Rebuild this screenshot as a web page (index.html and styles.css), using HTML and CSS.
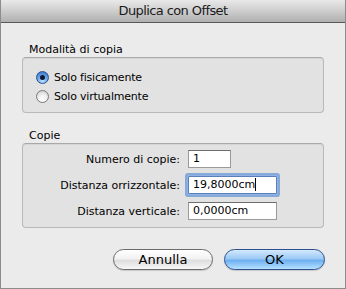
FILE: index.html
```html
<!DOCTYPE html>
<html lang="it">
<head>
  <meta charset="UTF-8">
  <title>Duplica con Offset</title>
  <link rel="stylesheet" href="styles.css">
</head>
<body>
  <div class="window">
    <!-- Title bar -->
    <div class="titlebar">Duplica con Offset</div>

    <div class="content">
      <!-- Copy mode -->
      <div class="group-label first">Modalità di copia</div>
      <div class="group radios">
        <div class="radio-row">
          <span class="radio checked"></span>
          <span>Solo fisicamente</span>
        </div>
        <div class="radio-row">
          <span class="radio"></span>
          <span>Solo virtualmente</span>
        </div>
      </div>

      <!-- Copies -->
      <div class="group-label">Copie</div>
      <div class="group fields">
        <div class="field-row">
          <label class="field-label">Numero di copie:</label>
          <div class="input short">1</div>
        </div>
        <div class="field-row">
          <label class="field-label">Distanza orrizzontale:</label>
          <div class="input focused">19,8000cm<span class="caret"></span></div>
        </div>
        <div class="field-row">
          <label class="field-label">Distanza verticale:</label>
          <div class="input">0,0000cm</div>
        </div>
      </div>

      <!-- Buttons -->
      <div class="buttons">
        <div class="button">Annulla</div>
        <div class="button default">OK</div>
      </div>
    </div>
  </div>
</body>
</html>
```

FILE: styles.css
```css
html, body {
  margin: 0;
  padding: 0;
  font-family: "DejaVu Sans", "Liberation Sans", sans-serif;
  font-size: 11px;
  color: #000;
}

body {
  width: 346px;
  height: 289px;
  overflow: hidden;
}

.window {
  box-sizing: border-box;
  width: 346px;
  height: 289px;
  background-color: #ebebeb;
  border: 1px solid #8c8c8c;
  border-top: none;
  display: flex;
  flex-direction: column;
}

.titlebar {
  height: 22px;
  line-height: 22px;
  text-align: center;
  font-size: 13px;
  letter-spacing: -0.6px;
  color: #1a1a1a;
  background: linear-gradient(#e9e9e9, #d3d3d3 40%, #b0b0b0);
  border-bottom: 1px solid #595959;
  flex-shrink: 0;
}

.content {
  padding: 0 21px;
  display: flex;
  flex-direction: column;
}

.group-label {
  height: 14px;
  line-height: 14px;
  padding-left: 7px;
  margin-top: 16px;
}

.group-label.first {
  margin-top: 20px;
}

.group {
  background-color: #e2e2e2;
  border: 1px solid #b9b9b9;
  border-top-color: #a9a9a9;
  border-radius: 4px;
  box-shadow: inset 0 1px 1px rgba(0, 0, 0, 0.06);
}

.radios {
  box-sizing: content-box;
  padding: 10px 0 0 13px;
  height: 44px;
  display: flex;
  flex-direction: column;
}

.radio-row {
  height: 19px;
  display: flex;
  align-items: center;
  gap: 5px;
  letter-spacing: -0.2px;
}

.radio {
  width: 13px;
  height: 13px;
  box-sizing: border-box;
  border-radius: 50%;
  border: 1px solid #7a7a7a;
  background: radial-gradient(circle at 50% 75%, #ffffff, #f2f2f2 40%, #cfcfcf 90%);
  position: relative;
  flex-shrink: 0;
}

.radio.checked {
  border-color: #2f4f8f;
  background: radial-gradient(circle at 50% 80%, #bfe3ff, #6aa9ea 45%, #2f6fc6 95%);
}

.radio.checked::after {
  content: "";
  position: absolute;
  left: 3px;
  top: 3px;
  width: 5px;
  height: 5px;
  border-radius: 50%;
  background-color: #0d1a33;
}

.fields {
  padding: 6px 0 7px 0;
  display: flex;
  flex-direction: column;
  gap: 8px;
}

.field-row {
  display: flex;
  align-items: center;
  height: 18px;
}

.field-label {
  width: 157px;
  text-align: right;
  margin-right: 8px;
  white-space: nowrap;
}

.input {
  box-sizing: border-box;
  width: 89px;
  height: 18px;
  line-height: 16px;
  padding-left: 4px;
  background-color: #fff;
  border: 1px solid #9a9a9a;
  border-top-color: #6e6e6e;
  white-space: nowrap;
}

.input.short {
  width: 43px;
}

.input.focused {
  box-shadow: 0 0 0 1px #8fb3e4, 0 0 0 3px rgba(95, 145, 215, 0.7);
  border-color: #5b7fb8;
  border-radius: 1px;
}

.caret {
  display: inline-block;
  width: 1px;
  height: 13px;
  background-color: #000;
  vertical-align: -3px;
}

.buttons {
  margin-top: 21px;
  margin-right: -1px;
  display: flex;
  justify-content: flex-end;
  gap: 11px;
}

.button {
  box-sizing: border-box;
  width: 100px;
  height: 21px;
  line-height: 19px;
  text-align: center;
  font-size: 13px;
  border-radius: 11px;
  border: 1px solid #6b6b6b;
  background: linear-gradient(#ffffff, #f3f3f3 45%, #dedede 55%, #f7f7f7);
  box-shadow: 0 1px 1px rgba(0, 0, 0, 0.15);
}

.button.default {
  width: 101px;
  border-color: #2d4f8e;
  background: linear-gradient(#d4e9fd, #9ccaf5 45%, #6eb0f0 55%, #b6e2ff);
}
```
